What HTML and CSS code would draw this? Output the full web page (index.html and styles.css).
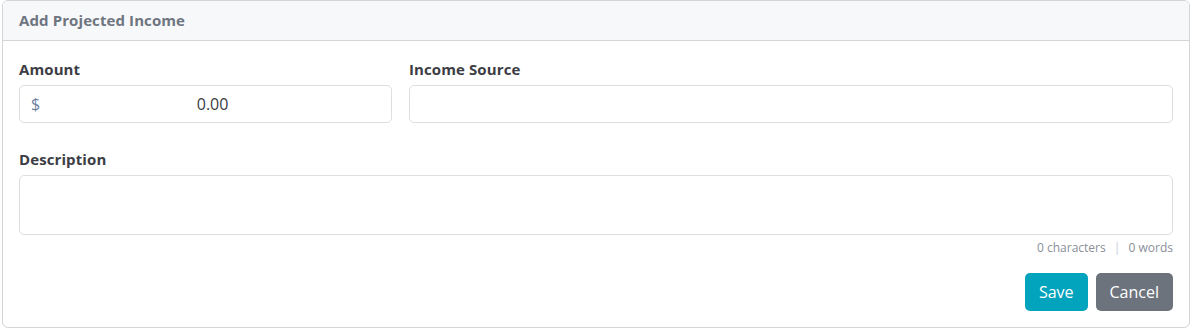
FILE: index.html
```html
<!DOCTYPE html>
<html>
<head>
    <title>Add Projected Income</title>
    <link rel="stylesheet" href="styles.css">
</head>
<body>
    <div class="card">
        <div class="card-header">Add Projected Income</div>
        <div class="card-body">
            <div class="form-row">
                <div class="form-group">
                    <label class="form-label">Amount</label>
                    <div class="input-group">
                        <span class="input-prefix">$</span>
                        <input class="input-money" type="text" value="0.00">
                    </div>
                </div>
                <div class="form-group">
                    <label class="form-label">Income Source</label>
                    <input class="form-control" type="text">
                </div>
            </div>

            <div class="form-group description">
                <label class="form-label">Description</label>
                <textarea class="form-control textarea"></textarea>
                <div class="counter">0 characters <span class="sep">|</span> 0 words</div>
            </div>

            <div class="actions">
                <button class="btn btn-save">Save</button>
                <button class="btn btn-cancel">Cancel</button>
            </div>
        </div>
    </div>
</body>
</html>
```

FILE: styles.css
```css
body {
    margin: 0 5px 0 2px;
    font-family: "Open Sans", Lato, sans-serif;
    background: #fff;
}

.card {
    border: 1px solid #d3d5d9;
    border-radius: 6px;
    overflow: hidden;
    height: 328px;
    box-sizing: border-box;
}

.card-header {
    height: 39px;
    line-height: 39px;
    padding: 0 16px;
    background: #f7f8fa;
    border-bottom: 1px solid #d3d5d9;
    color: #6e7580;
    font-weight: 700;
    font-size: 15px;
    letter-spacing: 0.1px;
}

.card-body {
    padding: 18px 16px 15px;
}

.form-row {
    display: grid;
    grid-template-columns: 373px 1fr;
    gap: 17px;
}

.form-label {
    display: block;
    font-size: 15px;
    font-weight: 700;
    line-height: 20px;
    color: #3c3d44;
    margin-bottom: 6px;
    letter-spacing: 0.1px;
}

.form-control {
    display: block;
    width: 100%;
    box-sizing: border-box;
    height: 38px;
    border: 1px solid #dcdee2;
    border-radius: 5px;
    font-family: inherit;
    font-size: 15px;
    padding: 6px 12px;
}

.input-group {
    display: flex;
    align-items: center;
    height: 38px;
    box-sizing: border-box;
    border: 1px solid #dcdee2;
    border-radius: 5px;
}

.input-prefix {
    padding: 0 6px 0 11px;
    color: #6d7fa0;
    font-size: 16px;
}

.input-money {
    flex: 1;
    border: none;
    outline: none;
    text-align: center;
    font-family: inherit;
    font-size: 16px;
    color: #3a3b45;
    padding: 0 12px 0 0;
    background: transparent;
}

.description {
    margin-top: 26px;
}

.textarea {
    height: 60px;
    resize: none;
}

.counter {
    text-align: right;
    font-size: 12px;
    line-height: 16px;
    margin-top: 5px;
    color: #8a8f99;
}

.counter .sep {
    color: #c5cbd8;
    margin: 0 5px;
}

.actions {
    display: flex;
    justify-content: flex-end;
    gap: 8px;
    margin-top: 17px;
}

.btn {
    height: 38px;
    border: none;
    border-radius: 5px;
    color: #fff;
    font-family: inherit;
    font-size: 16px;
    padding: 0 14px;
}

.btn-save {
    background: #02a3bd;
}

.btn-cancel {
    background: #6c737d;
}
```
